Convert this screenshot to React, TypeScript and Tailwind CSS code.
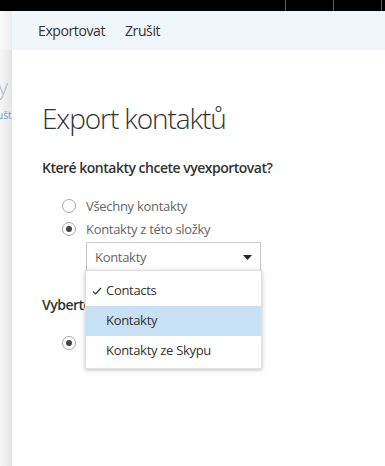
import React from "react";

const font = { fontFamily: '"Open Sans", "Noto Sans", sans-serif' };

function Radio({ checked }: { checked?: boolean }) {
    return (
        <span className="w-[14px] h-[14px] rounded-full border border-[#a6a6a6] bg-white flex items-center justify-center shrink-0">
            {checked && <span className="w-[6px] h-[6px] rounded-full bg-[#444]" />}
        </span>
    );
}

function Check() {
    return (
        <svg width="10" height="10" viewBox="0 0 10 10" className="shrink-0">
            <polyline points="1,5.5 3.6,8 9,2" fill="none" stroke="#333" strokeWidth="1.2" />
        </svg>
    );
}

export default function App() {
    return (
        <div className="relative w-[385px] h-[466px] bg-white overflow-hidden text-[#333]" style={font}>
            {/* top bar */}
            <div className="h-[11px] bg-black flex pl-[285px]">
                <div className="w-[48px] border-l border-[#5a5a5a]" />
                <div className="w-[48px] border-l border-[#5a5a5a]" />
                <div className="w-[4px] border-l border-[#5a5a5a]" />
            </div>

            <div className="flex h-[455px]">
                {/* page behind the dialog */}
                <div className="w-[12px] shrink-0 bg-gradient-to-r from-[#f7f7f7] to-[#e4e4e4] flex flex-col overflow-hidden">
                    <div className="h-[39px] bg-gradient-to-r from-[#fbfbfb] to-[#ececec]" />
                    <div className="relative h-[80px]">
                        <span className="absolute left-[-2px] top-[22px] text-[22px] font-light leading-[28px] text-[#a7b8c9]">
                            y
                        </span>
                        <span className="absolute left-[-3px] top-[59px] text-[10px] leading-[12px] text-[#6aa0d8]">
                            ušt
                        </span>
                    </div>
                </div>

                {/* dialog */}
                <div className="flex-1 flex flex-col bg-white">
                    <div className="h-[39px] bg-[#eff6fc] flex items-center pl-[26px] gap-[20px] text-[14px] text-[#333] tracking-[-0.4px]">
                        <span>Exportovat</span>
                        <span>Zrušit</span>
                    </div>

                    <div className="pl-[30px] pt-[50px] flex flex-col">
                        <h1 className="text-[28px] leading-[36px] font-light tracking-[-1.1px] text-[#333]">
                            Export kontaktů
                        </h1>

                        <p className="mt-[22px] text-[14px] leading-[20px] font-semibold tracking-[-0.5px] text-[#333]">
                            Které kontakty chcete vyexportovat?
                        </p>

                        <div className="mt-[21px] pl-[20px] flex flex-col gap-[9px] text-[13px] leading-[14px] text-[#666] tracking-[-0.3px]">
                            <label className="flex items-center gap-[10px]">
                                <Radio />
                                Všechny kontakty
                            </label>
                            <label className="flex items-center gap-[10px]">
                                <Radio checked />
                                Kontakty z této složky
                            </label>
                        </div>

                        <div className="mt-[6px] ml-[44px] w-[175px] h-[29px] border border-[#c8c8c8] flex items-center justify-between pl-[8px] pr-[8px] pt-[2px] text-[13px] text-[#666] tracking-[-0.3px]">
                            <span>Kontakty</span>
                            <svg width="9" height="5" viewBox="0 0 9 5">
                                <polygon points="0,0 9,0 4.5,5" fill="#222" />
                            </svg>
                        </div>

                        <p className="mt-[24px] text-[14px] leading-[20px] font-semibold tracking-[-0.5px] text-[#333]">
                            Vyberte formát souboru
                        </p>

                        <div className="mt-[18px] pl-[20px] flex items-center gap-[10px] text-[13px] text-[#666]">
                            <Radio checked />
                            CSV
                        </div>
                    </div>
                </div>
            </div>

            {/* open dropdown menu */}
            <div className="absolute left-[85px] top-[270px] w-[177px] h-[99px] bg-white border border-[#e1e1e1] shadow-[0_1px_4px_rgba(0,0,0,0.25)] pt-[5px] flex flex-col text-[13px] text-[#333] tracking-[-0.3px]">
                <div className="h-[30px] flex items-center pl-[6px] gap-[4px]">
                    <Check />
                    <span>Contacts</span>
                </div>
                <div className="h-[30px] flex items-center pl-[20px] bg-[#c7e0f4]">Kontakty</div>
                <div className="h-[30px] flex items-center pl-[20px]">Kontakty ze Skypu</div>
            </div>
        </div>
    );
}
